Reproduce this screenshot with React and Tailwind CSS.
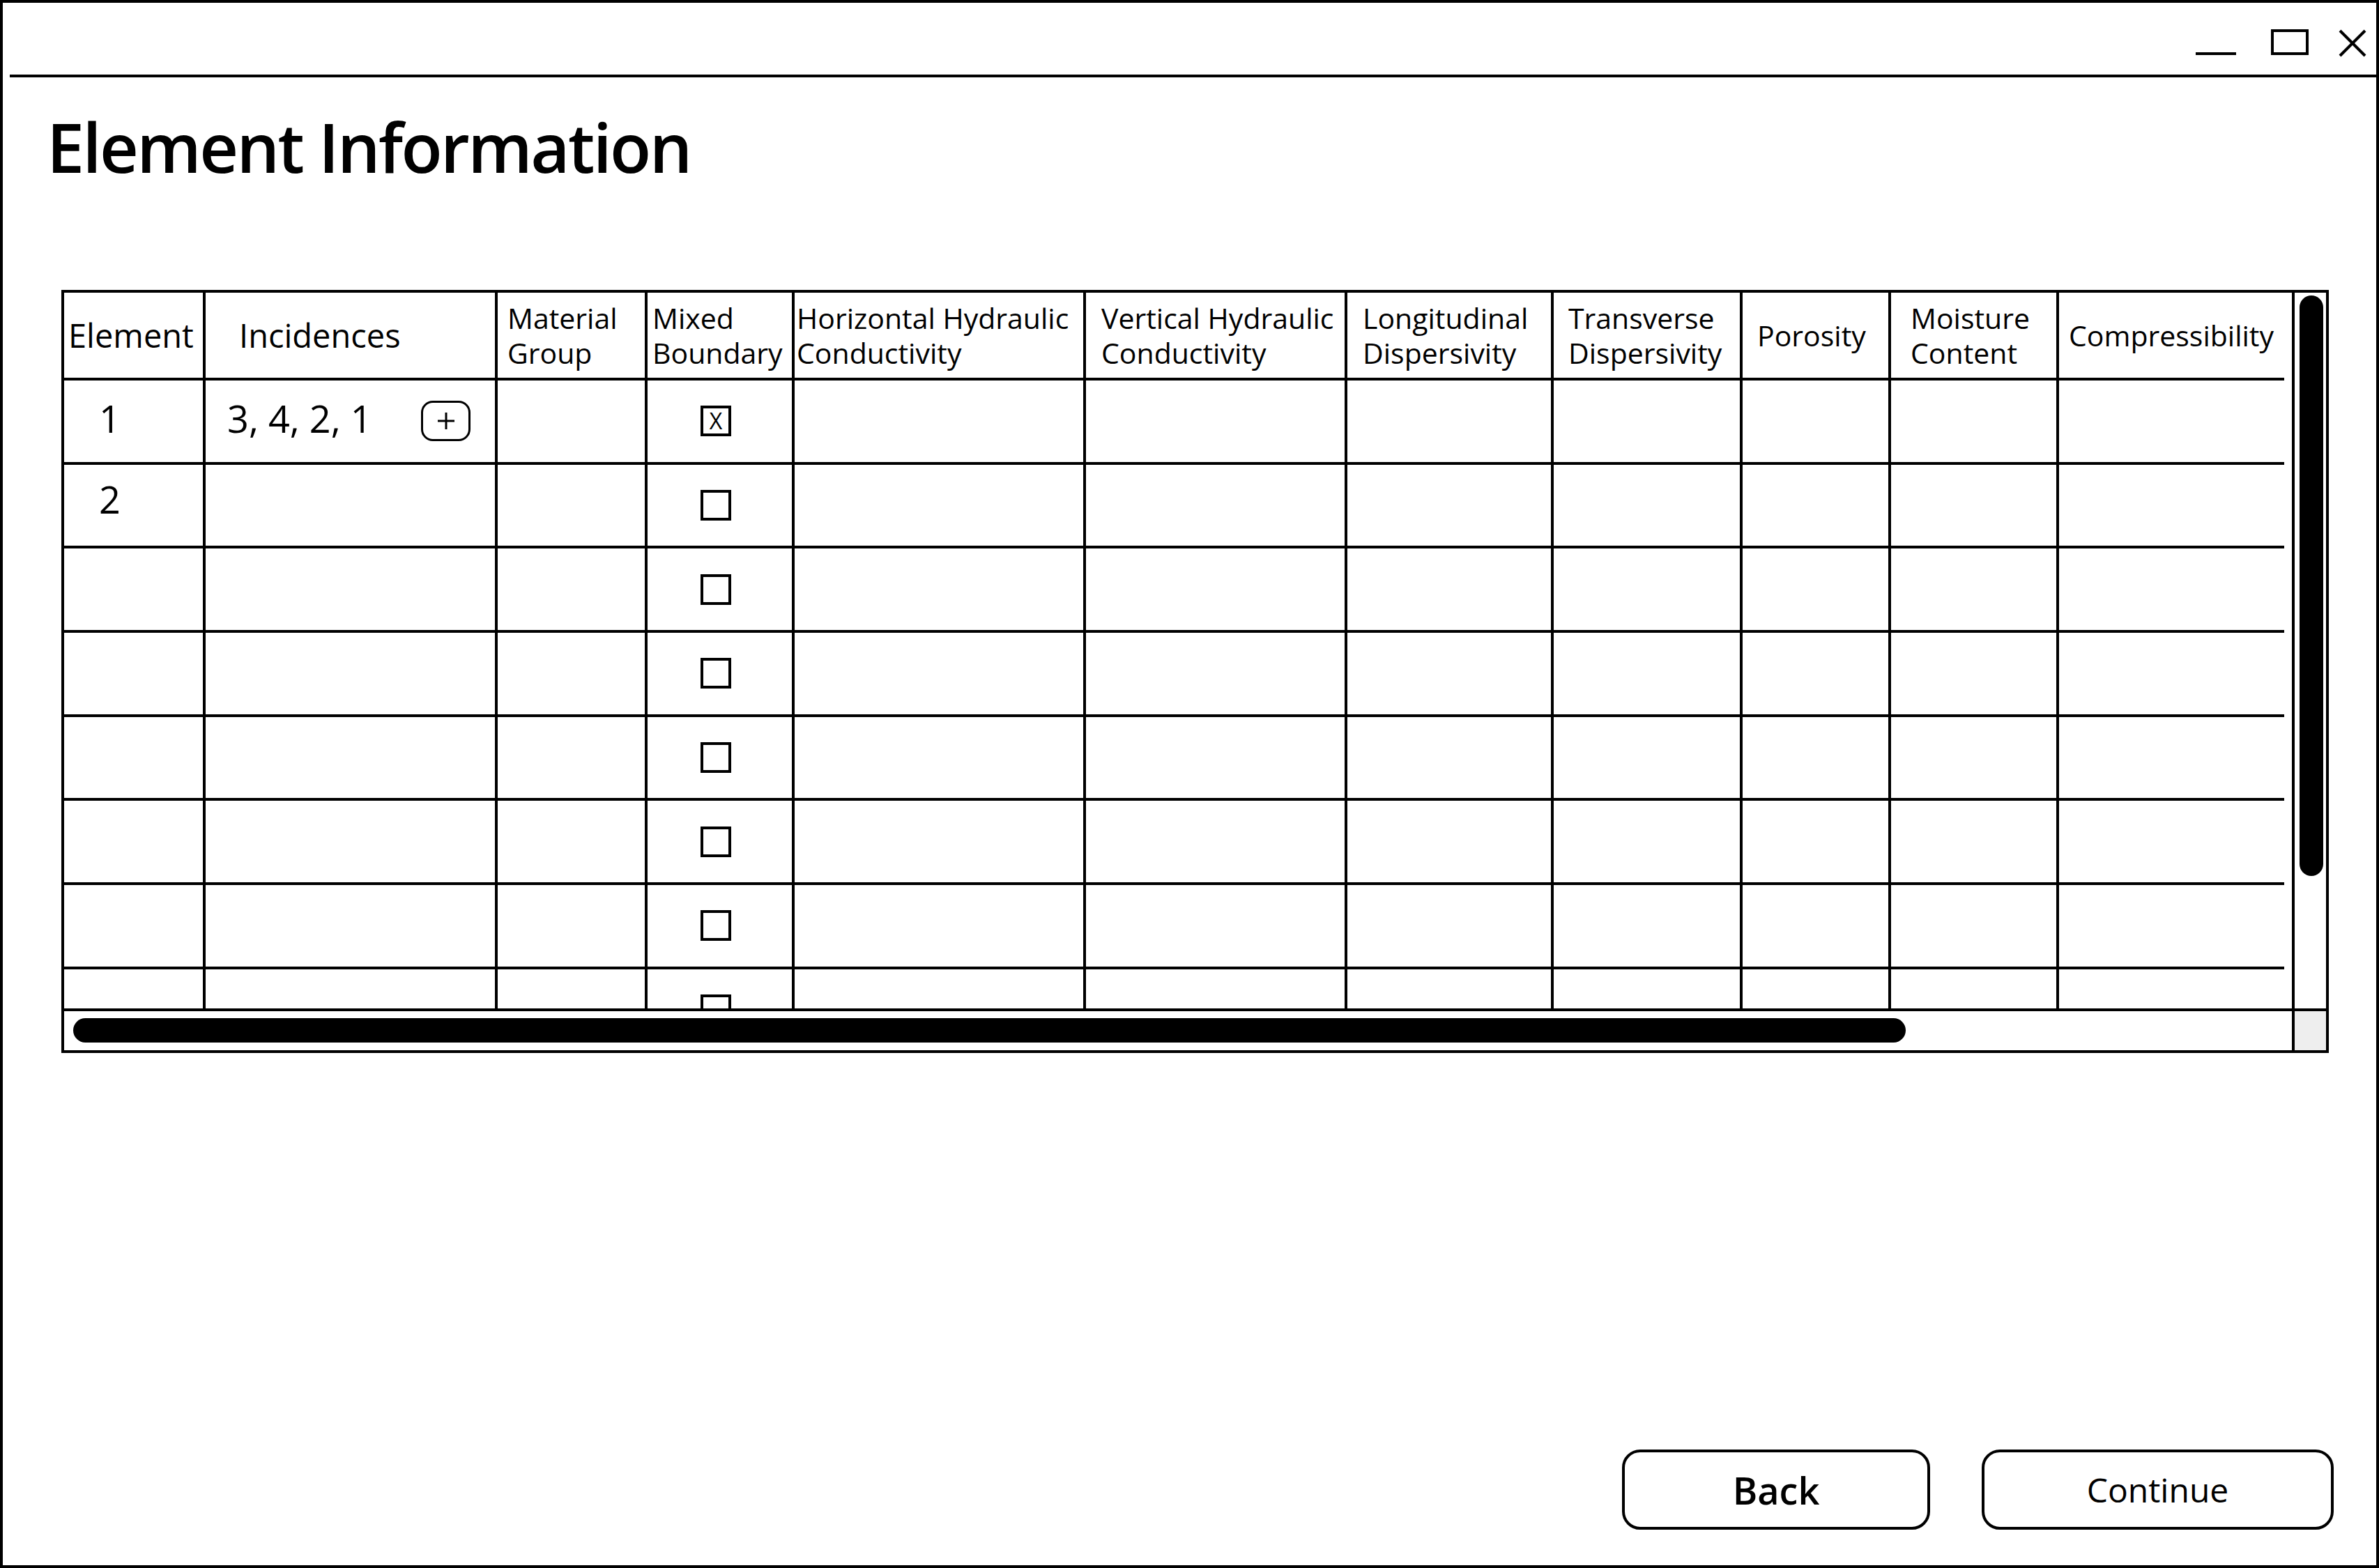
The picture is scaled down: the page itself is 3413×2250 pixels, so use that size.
import React from 'react';

const COLS = [
  { pl: 'pl-[6px]', label: ['Element'], big: true },
  { pl: 'pl-[48px]', label: ['Incidences'], big: true },
  { pl: 'pl-[14px]', label: ['Material', 'Group'] },
  { pl: 'pl-[7px]', label: ['Mixed', 'Boundary'] },
  { pl: 'pl-[3px]', label: ['Horizontal Hydraulic', 'Conductivity'] },
  { pl: 'pl-[22px]', label: ['Vertical Hydraulic', 'Conductivity'] },
  { pl: 'pl-[22px]', label: ['Longitudinal', 'Dispersivity'] },
  { pl: 'pl-[21px]', label: ['Transverse', 'Dispersivity'] },
  { pl: 'pl-[21px]', label: ['Porosity'] },
  { pl: 'pl-[28px]', label: ['Moisture', 'Content'] },
  { pl: 'pl-[14px]', label: ['Compressibility'] },
];

const GRID =
  'grid grid-cols-[203px_419px_215px_211px_418px_375px_296px_271px_213px_241px_323px] w-[3185px]';

const ROWS = [
  { id: '1', inc: '3, 4, 2, 1', checked: true, shift: 'mb-[8px]' },
  { id: '2', inc: '', checked: false, shift: 'mb-[18px]' },
  { id: '', inc: '', checked: false },
  { id: '', inc: '', checked: false },
  { id: '', inc: '', checked: false },
  { id: '', inc: '', checked: false },
  { id: '', inc: '', checked: false },
  { id: '', inc: '', checked: false },
];

function WindowControls() {
  return (
    <svg width="245" height="40" viewBox="0 0 245 40" fill="none" stroke="black" strokeWidth="4">
      <line x1="0" y1="35" x2="58" y2="35" />
      <rect x="110" y="2" width="50" height="33" />
      <line x1="207" y1="2" x2="243" y2="38" />
      <line x1="243" y1="2" x2="207" y2="38" />
    </svg>
  );
}

function Checkbox({ checked }) {
  return (
    <div className="ml-[76px] w-[44px] h-[44px] border-4 border-black flex items-center justify-center text-[32px] leading-none">
      {checked ? 'X' : ''}
    </div>
  );
}

function HeaderRow() {
  return (
    <div className={`${GRID} h-[126px] shrink-0 font-medium`}>
      {COLS.map((c, i) => (
        <div
          key={i}
          className={`flex flex-col justify-center border-b-4 border-black ${c.pl} ${
            i < COLS.length - 1 ? 'border-r-4' : ''
          } ${c.big ? 'text-[47px] leading-[60px]' : 'text-[41px] leading-[50px]'}`}
        >
          {c.label.map((l) => (
            <span key={l} className="whitespace-nowrap">
              {l}
            </span>
          ))}
        </div>
      ))}
    </div>
  );
}

function BodyRow({ row }) {
  return (
    <div className={`${GRID} h-[120.7px] shrink-0 font-medium`}>
      {COLS.map((c, i) => {
        const border = `border-b-4 border-black ${i < COLS.length - 1 ? 'border-r-4' : ''}`;
        if (i === 0) {
          return (
            <div key={i} className={`${border} flex items-center pl-[50px] text-[54px] leading-none`}>
              <span className={row.shift}>{row.id}</span>
            </div>
          );
        }
        if (i === 1) {
          return (
            <div key={i} className={`${border} flex items-center justify-between pl-[31px] pr-[35px]`}>
              <span className={`text-[54px] leading-none ${row.shift || ''}`}>{row.inc}</span>
              {row.inc && (
                <div className="w-[71px] h-[58px] border-[3px] border-black rounded-[17px] flex items-center justify-center">
                  <svg width="26" height="26" viewBox="0 0 26 26" stroke="black" strokeWidth="3">
                    <line x1="13" y1="1" x2="13" y2="25" />
                    <line x1="1" y1="13" x2="25" y2="13" />
                  </svg>
                </div>
              )}
            </div>
          );
        }
        if (i === 3) {
          return (
            <div key={i} className={`${border} flex items-center`}>
              <Checkbox checked={row.checked} />
            </div>
          );
        }
        return <div key={i} className={border} />;
      })}
    </div>
  );
}

export default function App() {
  return (
    <div className="w-[3413px] h-[2250px] border-4 border-black bg-white text-black flex flex-col font-['Open_Sans',sans-serif]">
      <div className="h-[103px] shrink-0 flex justify-end items-start pt-[38px] pr-[14px]">
        <WindowControls />
      </div>
      <div className="h-[4px] shrink-0 ml-[10px] bg-black" />

      <h1 className="mt-[51px] ml-[63px] text-[97px] leading-none font-semibold tracking-[-2.6px]">
        Element Information
      </h1>

      <div className="mt-[157px] ml-[84px] w-[3253px] h-[1095px] shrink-0 border-4 border-black flex flex-col">
        <div className="flex h-[1031px] shrink-0">
          <div className="w-[3200px] h-full border-r-4 border-b-4 border-black overflow-hidden flex flex-col">
            <HeaderRow />
            {ROWS.map((r, i) => (
              <BodyRow key={i} row={r} />
            ))}
          </div>
          <div className="w-[45px] h-full border-b-4 border-black">
            <div className="ml-[7px] mt-[4px] w-[34px] h-[833px] rounded-full bg-black" />
          </div>
        </div>
        <div className="flex flex-1">
          <div className="w-[3200px] h-full border-r-4 border-black">
            <div className="ml-[13px] mt-[10px] w-[2629px] h-[35px] rounded-full bg-black" />
          </div>
          <div className="w-[45px] h-full bg-[#eeeeee]" />
        </div>
      </div>

      <div className="mt-auto mb-[51px] mr-[61px] flex justify-end gap-[74px]">
        <button className="w-[442px] h-[115px] border-4 border-black rounded-[26px] text-[54px] font-semibold leading-none">
          Back
        </button>
        <button className="w-[505px] h-[115px] border-4 border-black rounded-[26px] text-[48px] font-medium leading-none">
          Continue
        </button>
      </div>
    </div>
  );
}
